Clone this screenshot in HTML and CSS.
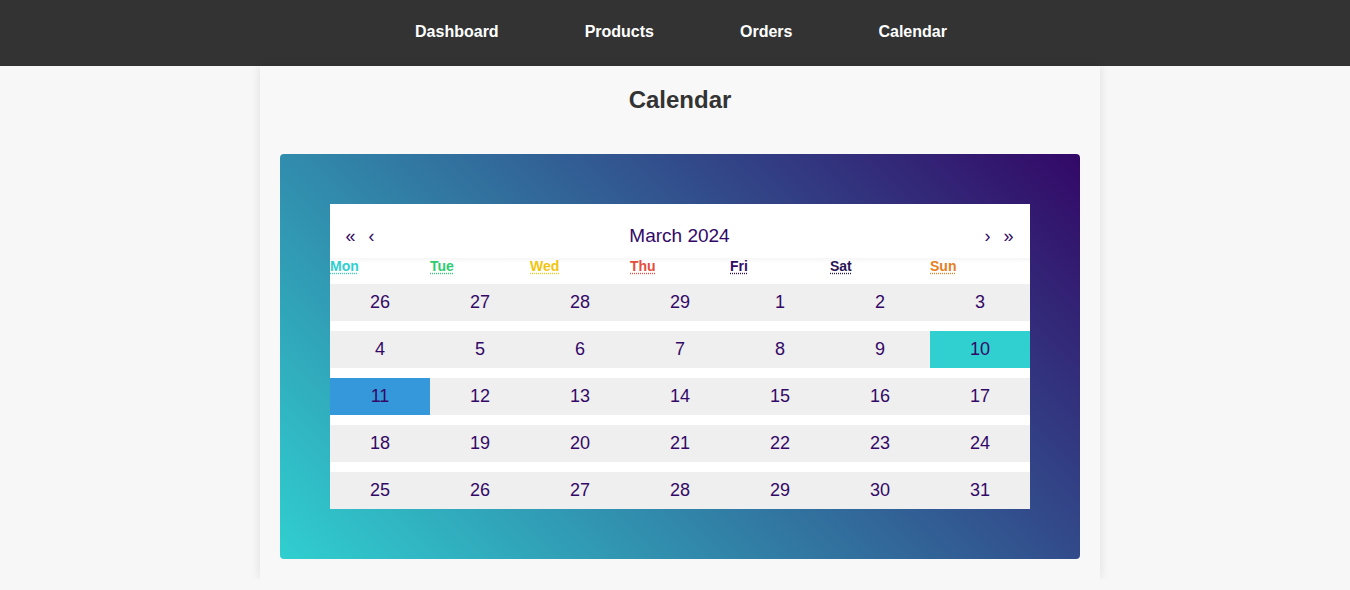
FILE: index.html
```html
<!DOCTYPE html>
<html>
<head>
<meta charset="utf-8">
<title>Calendar</title>
<link rel="stylesheet" href="styles.css">
</head>
<body>
<nav class="topnav">
  <a href="#">Dashboard</a>
  <a href="#">Products</a>
  <a href="#">Orders</a>
  <a href="#">Calendar</a>
</nav>
<div class="main">
  <main class="page">
    <h2 class="title">Calendar</h2>
    <div class="gradient-box">
      <div class="calendar">
        <div class="cal-nav">
          <button class="nav-btn">«</button>
          <button class="nav-btn">‹</button>
          <span class="cal-label">March 2024</span>
          <button class="nav-btn">›</button>
          <button class="nav-btn">»</button>
        </div>
        <div class="weekdays">
          <div class="wd mon"><abbr title="Monday">Mon</abbr></div>
          <div class="wd tue"><abbr title="Tuesday">Tue</abbr></div>
          <div class="wd wed"><abbr title="Wednesday">Wed</abbr></div>
          <div class="wd thu"><abbr title="Thursday">Thu</abbr></div>
          <div class="wd fri"><abbr title="Friday">Fri</abbr></div>
          <div class="wd sat"><abbr title="Saturday">Sat</abbr></div>
          <div class="wd sun"><abbr title="Sunday">Sun</abbr></div>
        </div>
        <div class="days">
          <div class="tile">26</div><div class="tile">27</div><div class="tile">28</div><div class="tile">29</div><div class="tile">1</div><div class="tile">2</div><div class="tile">3</div>
          <div class="tile">4</div><div class="tile">5</div><div class="tile">6</div><div class="tile">7</div><div class="tile">8</div><div class="tile">9</div><div class="tile today">10</div>
          <div class="tile active">11</div><div class="tile">12</div><div class="tile">13</div><div class="tile">14</div><div class="tile">15</div><div class="tile">16</div><div class="tile">17</div>
          <div class="tile">18</div><div class="tile">19</div><div class="tile">20</div><div class="tile">21</div><div class="tile">22</div><div class="tile">23</div><div class="tile">24</div>
          <div class="tile">25</div><div class="tile">26</div><div class="tile">27</div><div class="tile">28</div><div class="tile">29</div><div class="tile">30</div><div class="tile">31</div>
        </div>
      </div>
    </div>
  </main>
</div>
</body>
</html>
```
FILE: styles.css
```css
html, body {
  margin: 0;
  padding: 0;
}
body {
  background: #f7f7f7;
  font-family: "Liberation Sans", Arial, sans-serif;
  color: #333;
}
.topnav {
  background: #333;
  height: 66px;
  display: flex;
  justify-content: center;
  align-items: flex-start;
  gap: 86px;
  padding-left: 12px;
  box-sizing: border-box;
  padding-top: 23px;
}
.topnav a {
  color: #fff;
  font-weight: bold;
  font-size: 16px;
  line-height: 18px;
  text-decoration: none;
}
.main {
  padding-left: 10px;
}
.page {
  width: 840px;
  margin: 0 auto;
  background: #f8f8f8;
  box-shadow: 0 0 10px rgba(0, 0, 0, 0.1);
  padding: 20px 20px 20px;
  box-sizing: border-box;
}
.title {
  margin: 0 0 40px;
  text-align: center;
  font-size: 24px;
  line-height: 28px;
  font-weight: bold;
  color: #333;
}
.gradient-box {
  background: linear-gradient(45deg, #30cfd0 0%, #330867 100%);
  border-radius: 4px;
  padding: 50px;
}
.calendar {
  background: #fff;
  color: #330867;
}
.cal-nav {
  display: flex;
  align-items: center;
  height: 44px;
  padding: 10px 11px 0 10px;
}
.nav-btn {
  width: 21px;
  height: 44px;
  padding: 0;
  border: none;
  background: none;
  color: #330867;
  font-family: "Liberation Sans", Arial, sans-serif;
  font-size: 18px;
}
.cal-label {
  flex: 1;
  text-align: center;
  font-size: 19px;
}
.weekdays {
  display: grid;
  grid-template-columns: repeat(7, 100px);
  height: 26px;
  align-items: start;
  background: linear-gradient(#f6f6f6, #ffffff 5px);
}
.wd {
  font-size: 14px;
  font-weight: bold;
  line-height: 16px;
  padding-top: 0;
}
.wd abbr {
  text-decoration: underline dotted;
  text-underline-offset: 2px;
}
.mon { color: #30cfd0; }
.tue { color: #2ecc71; }
.wed { color: #f1c40f; }
.thu { color: #e74c3c; }
.fri { color: #330867; }
.sat { color: #2b1655; }
.sun { color: #e67e22; }
.days {
  display: grid;
  grid-template-columns: repeat(7, 100px);
  row-gap: 10px;
}
.tile {
  height: 37px;
  background: #efefef;
  display: flex;
  align-items: center;
  justify-content: center;
  font-size: 18px;
  color: #330867;
}
.tile.today {
  background: #30cfd0;
}
.tile.active {
  background: #3498db;
}
```
